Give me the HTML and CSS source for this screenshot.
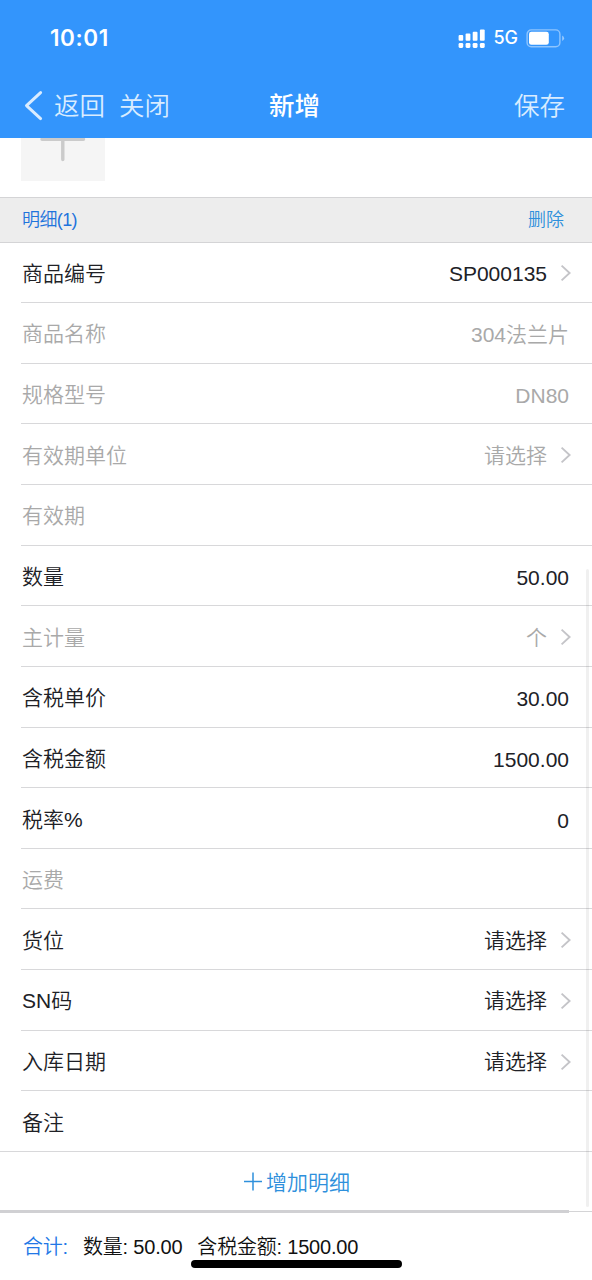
FILE: index.html
```html
<!DOCTYPE html>
<html lang="zh-CN">
<head>
<meta charset="utf-8">
<title>新增</title>
<link rel="stylesheet" href="styles.css">
</head>
<body>
<svg width="0" height="0" class="defs"><symbol id="chev" viewBox="0 0 12 18"><path d="M1.6 1.6 9.6 9 1.6 16.4" fill="none" stroke="#c4c4c8" stroke-width="1.9"/></symbol></svg>
<div class="screen">
  <header class="header">
    <div class="status">
      <span class="time">10:01</span>
      <svg class="signal" width="28" height="20" viewBox="0 0 28 20" fill="#fff"><rect x="0.6" y="7" width="4.6" height="5.8" rx="1"/><rect x="7.6" y="5.6" width="4.8" height="7.2" rx="1"/><rect x="14.7" y="3.7" width="4.8" height="9.1" rx="1"/><rect x="21.9" y="1.6" width="4.8" height="11.2" rx="1"/><rect x="0.6" y="14.9" width="4.6" height="5" rx="1.3"/><rect x="7.6" y="14.9" width="4.8" height="5" rx="1.3"/><rect x="14.7" y="14.9" width="4.8" height="5" rx="1.3"/><rect x="21.9" y="14.9" width="4.8" height="5" rx="1.3"/></svg>
      <span class="net">5G</span>
      <svg class="battery" width="39" height="20" viewBox="0 0 39 20"><rect x="1.1" y="1.9" width="32.8" height="16.8" rx="4.2" fill="none" stroke="#fff" stroke-opacity=".45" stroke-width="1.4"/><rect x="3" y="3.8" width="19.8" height="13" rx="2.4" fill="#fff"/><path d="M36.2 7.4q1.9 1 1.9 2.8t-1.9 2.8z" fill="#fff" fill-opacity=".5"/></svg>
    </div>
    <nav class="nav">
      <div class="nav-left">
        <svg class="back" width="20" height="32" viewBox="0 0 20 32"><path d="M16.6 2.6 2.5 15.6 16.6 28.6" fill="none" stroke="#d9ecff" stroke-width="3" stroke-linecap="round" stroke-linejoin="round"/></svg>
        <span class="return">返回</span><span>关闭</span>
      </div>
      <h1 class="title">新增</h1>
      <span class="save">保存</span>
    </nav>
  </header>
  <section class="upload"><div class="tile"><svg width="84" height="43" viewBox="0 0 84 43"><path d="M21 1.3H62.5M41.8 0V21.5" stroke="#cbcbcb" stroke-width="3.4" stroke-linecap="round" fill="none"/></svg></div></section>
  <div class="section-head"><span class="count">明细(1)</span><span class="delete">删除</span></div>
  <main class="list">
    <div class="row"><span>商品编号</span><span class="value">SP000135</span><svg class="chev"><use href="#chev"/></svg></div>
    <div class="row muted"><span>商品名称</span><span class="value end">304法兰片</span></div>
    <div class="row muted"><span>规格型号</span><span class="value end">DN80</span></div>
    <div class="row muted"><span>有效期单位</span><span class="value">请选择</span><svg class="chev"><use href="#chev"/></svg></div>
    <div class="row muted"><span>有效期</span></div>
    <div class="row"><span>数量</span><span class="value end">50.00</span></div>
    <div class="row muted"><span>主计量</span><span class="value">个</span><svg class="chev"><use href="#chev"/></svg></div>
    <div class="row"><span>含税单价</span><span class="value end">30.00</span></div>
    <div class="row"><span>含税金额</span><span class="value end">1500.00</span></div>
    <div class="row"><span>税率%</span><span class="value end">0</span></div>
    <div class="row muted"><span>运费</span></div>
    <div class="row"><span>货位</span><span class="value">请选择</span><svg class="chev"><use href="#chev"/></svg></div>
    <div class="row"><span>SN码</span><span class="value">请选择</span><svg class="chev"><use href="#chev"/></svg></div>
    <div class="row"><span>入库日期</span><span class="value">请选择</span><svg class="chev"><use href="#chev"/></svg></div>
    <div class="row last"><span>备注</span></div>
  </main>
  <div class="add"><svg width="20" height="20" viewBox="0 0 20 20"><path d="M1 9.5H19M10 .5V18.5" stroke="#2e90dc" stroke-width="1.5" fill="none"/></svg><span>增加明细</span></div>
  <footer class="total"><span class="sum">合计:</span><span class="qty">数量: 50.00</span><span>含税金额: 1500.00</span></footer>
  <div class="scrollbar-v"></div>
  <div class="scrollbar-h"></div>
  <div class="home"></div>
</div>
</body>
</html>
```
FILE: styles.css
```css
* { box-sizing: border-box; }
body { margin: 0; background: #fff; font-family: "Liberation Sans", "Noto Sans CJK SC", sans-serif; font-weight: 350; color: #202126; }
.defs { position: absolute; }
.screen { position: relative; width: 592px; height: 1280px; overflow: hidden; display: flex; flex-direction: column; }
.header { height: 138px; flex: none; background: #3395fc; color: #fff; }
.status { height: 76px; display: flex; align-items: center; padding: 0 27px 0 50px; }
.time { font: 600 22.5px/28px Inter, sans-serif; letter-spacing: .6px; }
.signal { margin-left: auto; }
.net { font: 450 18px/28px Inter, sans-serif; margin: 0 8px 0 7px; }
.battery { flex: none; }
.nav { height: 60px; display: grid; grid-template-columns: 1fr auto 1fr; align-items: center; padding: 0 27px 0 24px; font-size: 25.5px; line-height: 36px; color: #d9ecff; }
.nav-left { display: flex; align-items: center; }
.back { margin-right: 10px; }
.return { margin-right: 14px; }
.title { margin: 0; font-size: 25.5px; font-weight: 500; line-height: 36px; color: #fff; }
.save { text-align: right; }
.upload { height: 59px; flex: none; padding-left: 21px; }
.tile { width: 84px; height: 43px; background: #f5f5f5; overflow: hidden; }
.tile svg { display: block; }
.section-head { height: 45.5px; flex: none; display: flex; justify-content: space-between; align-items: center; background: #ededed; border-top: 1px solid #d4d4d6; border-bottom: 1px solid #d4d4d6; padding: 1px 28px 0 22px; font-size: 18px; line-height: 28px; }
.count { color: #1f74dc; letter-spacing: -.6px; }
.delete { color: #2e90dc; }
.list { height: 909.5px; flex: none; display: grid; grid-template-rows: repeat(15, 1fr); }
.row { display: flex; align-items: center; margin-left: 21px; padding: 3px 20px 0 1px; border-bottom: 1px solid #d8d8da; font-size: 21px; line-height: 32px; }
.row.last { margin-left: 0; padding-left: 22px; }
.muted { color: #a9a9a9; }
.value { margin-left: auto; }
.end { margin-right: 3px; padding-top: 2px; }
.chev { width: 12px; height: 18px; margin: -1px 0 0 13px; }
.add { height: 59px; flex: none; display: flex; justify-content: center; align-items: center; gap: 3px; padding: 3px 0 0 1px; color: #2e90dc; font-size: 21px; line-height: 32px; }
.add svg { margin-top: -3px; }
.total { flex: 1; display: flex; align-items: flex-start; border-top: 1px solid #d4d4d6; padding: 20px 0 0 23px; color: #111; font-size: 20px; line-height: 30px; letter-spacing: -.2px; }
.sum { color: #2277e6; margin-right: 15px; }
.qty { margin-right: 15px; }
.scrollbar-v { position: absolute; left: 586px; top: 569px; width: 3px; height: 638px; background: rgba(0, 0, 0, .06); border-radius: 2px; }
.scrollbar-h { position: absolute; left: 0; top: 1210px; width: 569px; height: 3px; background: #d0d0d3; }
.home { position: absolute; left: 191px; top: 1260px; width: 211px; height: 8px; border-radius: 4px; background: #000; }
```
